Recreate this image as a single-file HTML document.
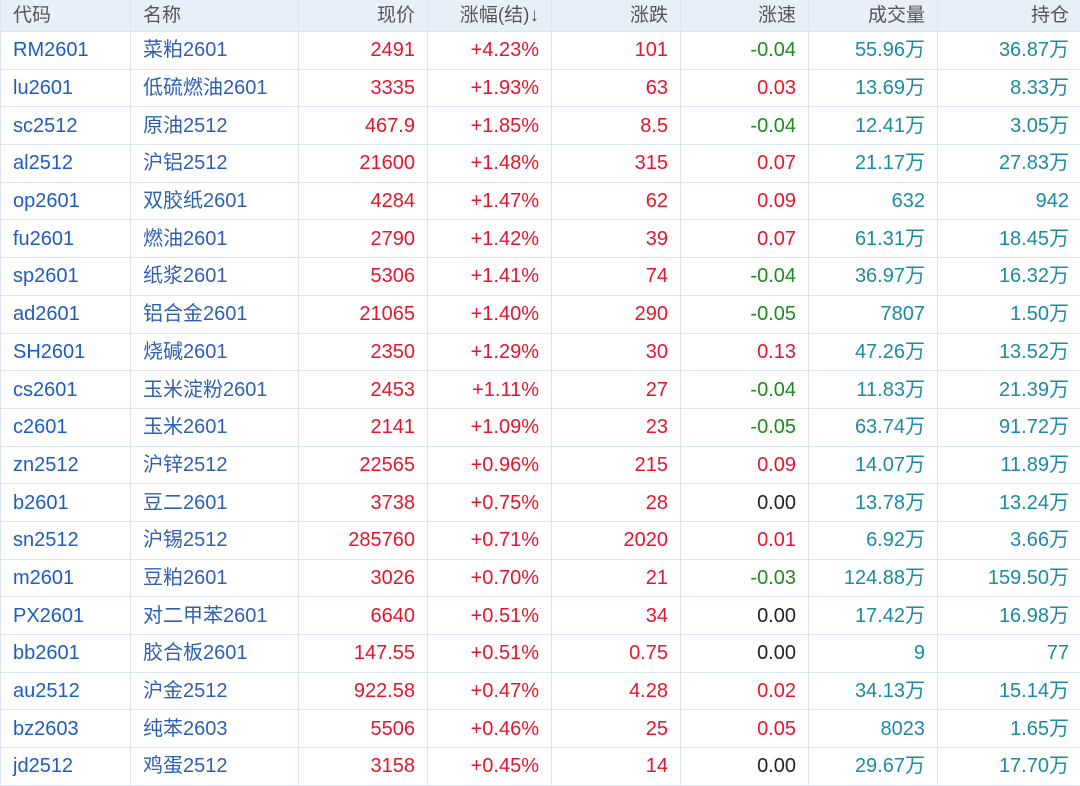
<!DOCTYPE html>
<html><head><meta charset="utf-8"><style>
html,body{margin:0;padding:0;background:#fff;width:1080px;height:786px;overflow:hidden}
table{border-collapse:collapse;table-layout:fixed;width:1081px;font-family:"Liberation Sans","Noto Sans CJK SC",sans-serif;font-size:20px}
td,th{border:1px solid #dbe5f3;padding:0 12px 0 12px;white-space:nowrap;overflow:hidden;text-align:right;height:36.7px;line-height:36px}
th{background:#e9eff8;color:#555;font-weight:normal;height:31px;line-height:30px;font-size:19px}
th.l,td.l{text-align:left}
td.c{color:#1f5cbf}td.n{color:#2f5fb3}
.r{color:#e5162b}.g{color:#1c8a1c}.k{color:#222}.t{color:#1a8aa6}
tr:first-child th{border-top:none}
</style></head><body>
<table>
<colgroup><col style="width:130px"><col style="width:168px"><col style="width:129px"><col style="width:124px"><col style="width:129px"><col style="width:128px"><col style="width:129px"><col style="width:144px"></colgroup>
<tr><th class="l">代码</th><th class="l">名称</th><th>现价</th><th>涨幅(结)↓</th><th>涨跌</th><th>涨速</th><th>成交量</th><th>持仓</th></tr>
<tr><td class="l c">RM2601</td><td class="l n">菜粕2601</td><td class="r">2491</td><td class="r">+4.23%</td><td class="r">101</td><td class="g">-0.04</td><td class="t">55.96万</td><td class="t">36.87万</td></tr>
<tr><td class="l c">lu2601</td><td class="l n">低硫燃油2601</td><td class="r">3335</td><td class="r">+1.93%</td><td class="r">63</td><td class="r">0.03</td><td class="t">13.69万</td><td class="t">8.33万</td></tr>
<tr><td class="l c">sc2512</td><td class="l n">原油2512</td><td class="r">467.9</td><td class="r">+1.85%</td><td class="r">8.5</td><td class="g">-0.04</td><td class="t">12.41万</td><td class="t">3.05万</td></tr>
<tr><td class="l c">al2512</td><td class="l n">沪铝2512</td><td class="r">21600</td><td class="r">+1.48%</td><td class="r">315</td><td class="r">0.07</td><td class="t">21.17万</td><td class="t">27.83万</td></tr>
<tr><td class="l c">op2601</td><td class="l n">双胶纸2601</td><td class="r">4284</td><td class="r">+1.47%</td><td class="r">62</td><td class="r">0.09</td><td class="t">632</td><td class="t">942</td></tr>
<tr><td class="l c">fu2601</td><td class="l n">燃油2601</td><td class="r">2790</td><td class="r">+1.42%</td><td class="r">39</td><td class="r">0.07</td><td class="t">61.31万</td><td class="t">18.45万</td></tr>
<tr><td class="l c">sp2601</td><td class="l n">纸浆2601</td><td class="r">5306</td><td class="r">+1.41%</td><td class="r">74</td><td class="g">-0.04</td><td class="t">36.97万</td><td class="t">16.32万</td></tr>
<tr><td class="l c">ad2601</td><td class="l n">铝合金2601</td><td class="r">21065</td><td class="r">+1.40%</td><td class="r">290</td><td class="g">-0.05</td><td class="t">7807</td><td class="t">1.50万</td></tr>
<tr><td class="l c">SH2601</td><td class="l n">烧碱2601</td><td class="r">2350</td><td class="r">+1.29%</td><td class="r">30</td><td class="r">0.13</td><td class="t">47.26万</td><td class="t">13.52万</td></tr>
<tr><td class="l c">cs2601</td><td class="l n">玉米淀粉2601</td><td class="r">2453</td><td class="r">+1.11%</td><td class="r">27</td><td class="g">-0.04</td><td class="t">11.83万</td><td class="t">21.39万</td></tr>
<tr><td class="l c">c2601</td><td class="l n">玉米2601</td><td class="r">2141</td><td class="r">+1.09%</td><td class="r">23</td><td class="g">-0.05</td><td class="t">63.74万</td><td class="t">91.72万</td></tr>
<tr><td class="l c">zn2512</td><td class="l n">沪锌2512</td><td class="r">22565</td><td class="r">+0.96%</td><td class="r">215</td><td class="r">0.09</td><td class="t">14.07万</td><td class="t">11.89万</td></tr>
<tr><td class="l c">b2601</td><td class="l n">豆二2601</td><td class="r">3738</td><td class="r">+0.75%</td><td class="r">28</td><td class="k">0.00</td><td class="t">13.78万</td><td class="t">13.24万</td></tr>
<tr><td class="l c">sn2512</td><td class="l n">沪锡2512</td><td class="r">285760</td><td class="r">+0.71%</td><td class="r">2020</td><td class="r">0.01</td><td class="t">6.92万</td><td class="t">3.66万</td></tr>
<tr><td class="l c">m2601</td><td class="l n">豆粕2601</td><td class="r">3026</td><td class="r">+0.70%</td><td class="r">21</td><td class="g">-0.03</td><td class="t">124.88万</td><td class="t">159.50万</td></tr>
<tr><td class="l c">PX2601</td><td class="l n">对二甲苯2601</td><td class="r">6640</td><td class="r">+0.51%</td><td class="r">34</td><td class="k">0.00</td><td class="t">17.42万</td><td class="t">16.98万</td></tr>
<tr><td class="l c">bb2601</td><td class="l n">胶合板2601</td><td class="r">147.55</td><td class="r">+0.51%</td><td class="r">0.75</td><td class="k">0.00</td><td class="t">9</td><td class="t">77</td></tr>
<tr><td class="l c">au2512</td><td class="l n">沪金2512</td><td class="r">922.58</td><td class="r">+0.47%</td><td class="r">4.28</td><td class="r">0.02</td><td class="t">34.13万</td><td class="t">15.14万</td></tr>
<tr><td class="l c">bz2603</td><td class="l n">纯苯2603</td><td class="r">5506</td><td class="r">+0.46%</td><td class="r">25</td><td class="r">0.05</td><td class="t">8023</td><td class="t">1.65万</td></tr>
<tr><td class="l c">jd2512</td><td class="l n">鸡蛋2512</td><td class="r">3158</td><td class="r">+0.45%</td><td class="r">14</td><td class="k">0.00</td><td class="t">29.67万</td><td class="t">17.70万</td></tr>
</table>
</body></html>
